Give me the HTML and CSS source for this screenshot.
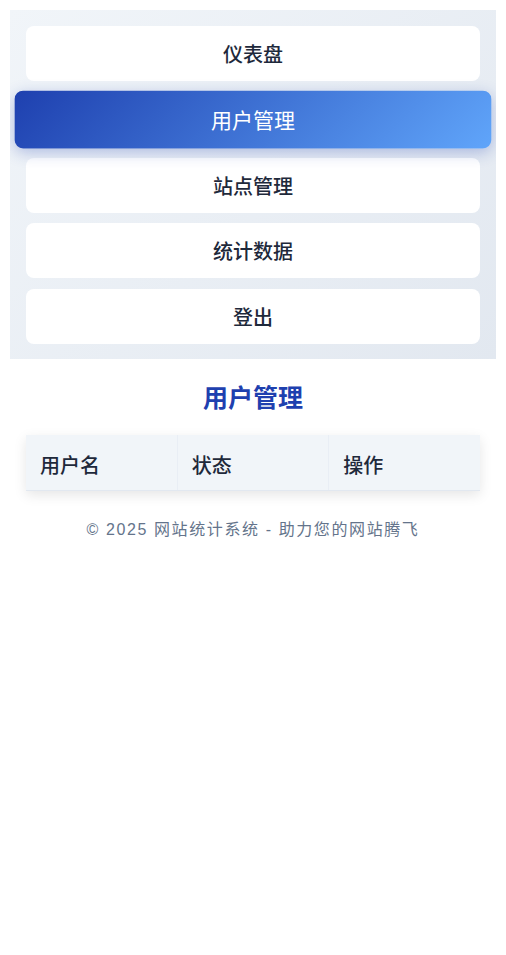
FILE: index.html
```html
<!DOCTYPE html>
<html lang="zh-CN">
<head>
  <meta charset="UTF-8">
  <meta name="viewport" content="width=device-width, initial-scale=1.0">
  <title>用户管理</title>
  <link rel="stylesheet" href="styles.css">
</head>
<body>
  <div class="nav">
    <a class="nav-item" href="#">仪表盘</a>
    <a class="nav-item active" href="#">用户管理</a>
    <a class="nav-item" href="#">站点管理</a>
    <a class="nav-item" href="#">统计数据</a>
    <a class="nav-item" href="#">登出</a>
  </div>

  <div class="main">
    <h2>用户管理</h2>
    <table class="user-table">
      <thead>
        <tr>
          <th>用户名</th>
          <th>状态</th>
          <th>操作</th>
        </tr>
      </thead>
      <tbody>
        <!-- 用户列表 -->
      </tbody>
    </table>
  </div>

  <div class="footer">© 2025 网站统计系统 - 助力您的网站腾飞</div>
</body>
</html>
```

FILE: styles.css
```css
body {
  margin: 10px;
  font-family: "Liberation Sans", Arial, "Noto Sans CJK SC", sans-serif;
  color: #1e293b;
  background-color: #fff;
}

.nav {
  display: flex;
  flex-direction: column;
  gap: 10.75px;
  padding: 16px 16px 15px;
  background: linear-gradient(135deg, #f1f5f9, #e2e8f0);
}

.nav-item {
  display: block;
  height: 52px;
  padding-top: 3px;
  line-height: 52px;
  text-align: center;
  font-size: 20px;
  font-weight: 500;
  color: #1e293b;
  text-decoration: none;
  background-color: #fff;
  border-radius: 8px;
}

.nav-item.active {
  color: #fff;
  font-weight: 400;
  background: linear-gradient(135deg, #1e40af, #60a5fa);
  transform: scale(1.05);
  box-shadow: 0 4px 14px rgba(30, 64, 175, 0.3);
}

.main {
  padding: 0 16px;
}

.main h2 {
  margin: 24px 0 22px;
  line-height: 30px;
  text-align: center;
  font-size: 25px;
  font-weight: 700;
  color: #1e40af;
}

.user-table {
  width: 100%;
  border-collapse: collapse;
  table-layout: fixed;
  box-shadow: 0 4px 12px rgba(0, 0, 0, 0.1);
}

.user-table th {
  height: 52px;
  padding: 3px 14px 0;
  text-align: left;
  font-size: 20px;
  font-weight: 500;
  background-color: #f1f5f9;
  border-right: 1px solid #e9eef5;
  border-bottom: 1px solid #e2e8f0;
}

.user-table th:last-child {
  border-right: none;
}

.footer {
  margin-top: 29px;
  line-height: 20px;
  text-align: center;
  font-size: 16px;
  letter-spacing: 1.6px;
  color: #64748b;
}
```
